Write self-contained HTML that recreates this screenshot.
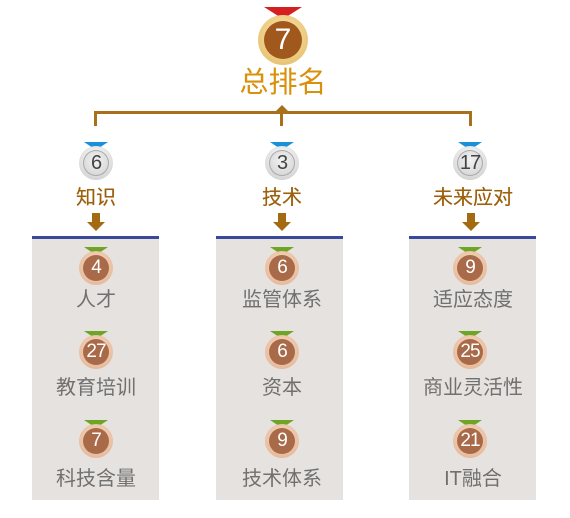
<!DOCTYPE html>
<html><head><meta charset="utf-8"><style>
body{margin:0;width:570px;height:518px;background:#fff;position:relative;overflow:hidden;font-family:"Liberation Sans","Noto Sans CJK SC",sans-serif}
.a{position:absolute}
.panel{position:absolute;top:236px;width:127px;height:264px;background:#e6e2df;border-top:3px solid #3a4a9a;box-sizing:border-box}
.lbl{position:absolute;width:200px;text-align:center;font-size:20px;color:#707070;line-height:22px}
.h{position:absolute;width:200px;text-align:center;font-size:20px;color:#9c600c;line-height:22px;text-shadow:0 0 0.4px #9c600c}
.bm{position:absolute;width:34px;height:34px;border-radius:50%;background:radial-gradient(circle at 50% 40%,#f8dcc4,#e0b090);box-sizing:border-box}
.bm i{position:absolute;left:4px;top:4px;width:26px;height:26px;border-radius:50%;background:#a86a48;color:#fff;font-style:normal;font-size:19px;line-height:26px;text-align:center;letter-spacing:-1px}
.rg{position:absolute;width:0;height:0;border-left:12px solid transparent;border-right:12px solid transparent;border-top:8px solid #6ea524}
.rb{position:absolute;width:0;height:0;border-left:12px solid transparent;border-right:12px solid transparent;border-top:8px solid #1a90d8}
.sm{position:absolute;width:34px;height:34px;border-radius:50%;background:radial-gradient(circle at 50% 35%,#ffffff,#c8c8c8);}
.sm i{position:absolute;left:4px;top:4px;width:26px;height:26px;border-radius:50%;background:radial-gradient(circle at 50% 40%,#f2f2f2,#cfcfcf);box-shadow:inset 0 0 0 1px #aaa;color:#444;font-style:normal;font-size:20px;line-height:26px;text-align:center;letter-spacing:-1px}
.arr{position:absolute;width:8px;height:9px;background:#a46a12}
.arr:after{content:"";position:absolute;left:-5px;top:9px;border-left:9px solid transparent;border-right:9px solid transparent;border-top:9px solid #a46a12}
</style></head><body>
<div class="a" style="left:264px;top:7px;width:0;height:0;border-left:19px solid transparent;border-right:19px solid transparent;border-top:12px solid #d42020"></div>
<div class="a" style="left:258px;top:15px;width:50px;height:50px;border-radius:50%;background:radial-gradient(circle at 50% 40%,#fbe6b0,#e2b860)"></div>
<div class="a" style="left:264px;top:21px;width:38px;height:38px;border-radius:50%;background:#a0581c;color:#fff;font-size:30px;line-height:38px;text-align:center">7</div>
<div class="a" style="left:183px;top:66px;width:200px;text-align:center;font-size:29px;color:#d9900a;line-height:34px">总排名</div>
<div class="a" style="left:94px;top:111px;width:378px;height:3px;background:#a8701a"></div>
<div class="a" style="left:94px;top:111px;width:3px;height:15px;background:#a8701a"></div>
<div class="a" style="left:280px;top:111px;width:3px;height:15px;background:#a8701a"></div>
<div class="a" style="left:469px;top:111px;width:3px;height:15px;background:#a8701a"></div>
<div class="a" style="left:276px;top:105px;width:0;height:0;border-left:6px solid transparent;border-right:6px solid transparent;border-bottom:6px solid #a8701a"></div>

<div class="rb" style="left:84px;top:142px"></div><div class="sm" style="left:79px;top:146px"><i>6</i></div>
<div class="rb" style="left:270px;top:142px"></div><div class="sm" style="left:265px;top:146px"><i>3</i></div>
<div class="rb" style="left:458px;top:142px"></div><div class="sm" style="left:453px;top:146px"><i>17</i></div>
<div class="h" style="left:-4px;top:187px">知识</div>
<div class="h" style="left:182px;top:187px">技术</div>
<div class="h" style="left:373px;top:187px">未来应对</div>
<div class="arr" style="left:92px;top:213px"></div>
<div class="arr" style="left:278px;top:213px"></div>
<div class="arr" style="left:467px;top:213px"></div>

<div class="panel" style="left:32px"></div>
<div class="panel" style="left:216px"></div>
<div class="panel" style="left:409px"></div>

<div class="rg" style="left:84px;top:247px"></div><div class="bm" style="left:79px;top:251px"><i>4</i></div>
<div class="lbl" style="left:-4px;top:289px">人才</div>
<div class="rg" style="left:84px;top:331px"></div><div class="bm" style="left:79px;top:335px"><i>27</i></div>
<div class="lbl" style="left:-4px;top:377px">教育培训</div>
<div class="rg" style="left:84px;top:420px"></div><div class="bm" style="left:79px;top:424px"><i>7</i></div>
<div class="lbl" style="left:-4px;top:468px">科技含量</div>
<div class="rg" style="left:270px;top:247px"></div><div class="bm" style="left:265px;top:251px"><i>6</i></div>
<div class="lbl" style="left:182px;top:289px">监管体系</div>
<div class="rg" style="left:270px;top:331px"></div><div class="bm" style="left:265px;top:335px"><i>6</i></div>
<div class="lbl" style="left:182px;top:377px">资本</div>
<div class="rg" style="left:270px;top:420px"></div><div class="bm" style="left:265px;top:424px"><i>9</i></div>
<div class="lbl" style="left:182px;top:468px">技术体系</div>
<div class="rg" style="left:458px;top:247px"></div><div class="bm" style="left:453px;top:251px"><i>9</i></div>
<div class="lbl" style="left:373px;top:289px">适应态度</div>
<div class="rg" style="left:458px;top:331px"></div><div class="bm" style="left:453px;top:335px"><i>25</i></div>
<div class="lbl" style="left:373px;top:377px">商业灵活性</div>
<div class="rg" style="left:458px;top:420px"></div><div class="bm" style="left:453px;top:424px"><i>21</i></div>
<div class="lbl" style="left:373px;top:468px">IT融合</div>
</body></html>
